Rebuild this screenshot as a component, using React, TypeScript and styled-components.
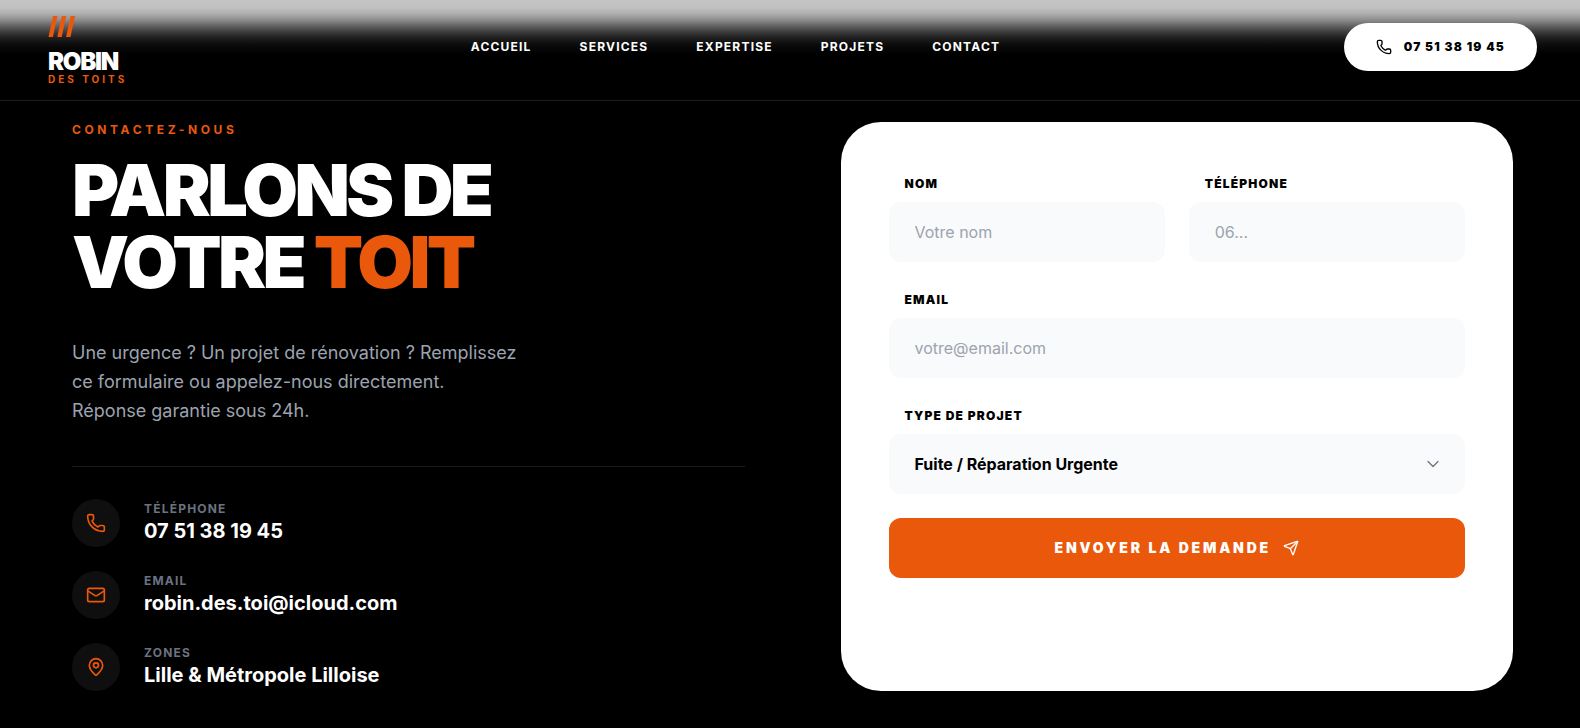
import React from "react";
import styled, { createGlobalStyle } from "styled-components";
import { ChevronDown, Mail, MapPin, Phone, Send } from "lucide-react";

const GlobalStyle = createGlobalStyle`
  *, *::before, *::after { box-sizing: border-box; }
  body {
    margin: 0;
    background: #000;
    color: #fff;
    font-family: Inter, "Liberation Sans", sans-serif;
    font-size: 16px;
    line-height: 24px;
  }
  h1, p, dl, dd, dt { margin: 0; }
  a { color: inherit; text-decoration: none; }
`;

const Header = styled.header`
  display: flex;
  align-items: center;
  justify-content: space-between;
  padding: 9px 43px 16px 48px;
  border-bottom: 1px solid #1c1c1c;
  background: linear-gradient(
    to bottom,
    #c5c5c5 0px,
    #c0c0c0 8px,
    #adadad 14px,
    #8c8c8c 20px,
    #626262 26px,
    #3c3c3c 32px,
    #1e1e1e 38px,
    #0b0b0b 45px,
    #000 54px
  );
`;

const Logo = styled.a`
  display: flex;
  flex-direction: column;
  padding-top: 7px;
`;

const LogoMark = styled.svg`
  width: 28px;
  height: 21px;
  margin-bottom: 13px;
`;

const LogoName = styled.span`
  font-size: 24px;
  line-height: 24px;
  font-weight: 900;
  letter-spacing: -0.05em;
`;

const LogoTag = styled.span`
  font-size: 10px;
  line-height: 10px;
  font-weight: 700;
  letter-spacing: 3px;
  color: #ea580c;
`;

const Nav = styled.nav`
  display: flex;
  gap: 48px;
`;

const NavLink = styled.a`
  font-size: 12px;
  line-height: 16px;
  font-weight: 700;
  letter-spacing: 0.1em;
`;

const CallLink = styled.a`
  display: flex;
  align-items: center;
  gap: 12px;
  padding: 16px 32px;
  border-radius: 24px;
  background: #fff;
  color: #000;
  font-size: 12px;
  line-height: 16px;
  font-weight: 900;
  letter-spacing: 0.1em;
`;

const Main = styled.main`
  display: grid;
  grid-template-columns: 1fr 1fr;
  gap: 96px;
  padding: 21px 67px 37px 72px;
`;

const Eyebrow = styled.p`
  margin-bottom: 16px;
  color: #ea580c;
  font-size: 12px;
  line-height: 16px;
  font-weight: 700;
  letter-spacing: 0.3em;
`;

const Title = styled.h1`
  margin-bottom: 40px;
  font-size: 72px;
  line-height: 72px;
  font-weight: 900;
  letter-spacing: -0.05em;
`;

const Accent = styled.span`
  color: #ea580c;
`;

const Intro = styled.p`
  max-width: 448px;
  margin-bottom: 41px;
  color: #9ca3af;
  font-size: 18px;
  line-height: 29px;
`;

const ContactList = styled.dl`
  display: flex;
  flex-direction: column;
  gap: 24px;
  padding-top: 32px;
  border-top: 1px solid #1a1a1a;
`;

const ContactItem = styled.div`
  display: flex;
  align-items: center;
  gap: 24px;
`;

const ContactIcon = styled.span`
  display: grid;
  place-items: center;
  width: 48px;
  height: 48px;
  border-radius: 50%;
  background: #0f0f0f;
  color: #ea580c;
`;

const ContactLabel = styled.dt`
  color: #6b7280;
  font-size: 12px;
  line-height: 16px;
  font-weight: 700;
  letter-spacing: 0.1em;
`;

const ContactValue = styled.dd`
  font-size: 20px;
  line-height: 28px;
  font-weight: 700;
`;

const Form = styled.form`
  display: flex;
  flex-direction: column;
  gap: 24px;
  padding: 48px;
  border-radius: 40px;
  background: #fff;
  color: #000;
`;

const FieldRow = styled.div`
  display: grid;
  grid-template-columns: 1fr 1fr;
  gap: 24px;
`;

const Field = styled.div`
  display: flex;
  flex-direction: column;
  gap: 8px;
  min-width: 0;
`;

const Label = styled.label`
  padding: 4px 0 0 16px;
  font-size: 12px;
  line-height: 20px;
  font-weight: 900;
  letter-spacing: 0.1em;
`;

const Input = styled.input`
  width: 100%;
  height: 60px;
  padding: 16px 24px;
  border: 2px solid transparent;
  border-radius: 12px;
  background: #f9fafb;
  color: #000;
  font: 400 16px/24px Inter, "Liberation Sans", sans-serif;
  &::placeholder { color: #9ca3af; opacity: 1; }
`;

const SelectWrap = styled.div`
  position: relative;
`;

const Select = styled.select`
  appearance: none;
  display: block;
  width: 100%;
  height: 60px;
  padding: 16px 24px;
  border: 2px solid transparent;
  border-radius: 12px;
  background: #f9fafb;
  color: #000;
  font: 700 16px/24px Inter, "Liberation Sans", sans-serif;
`;

const SelectArrow = styled(ChevronDown)`
  position: absolute;
  right: 22px;
  top: 20px;
  color: #6b7280;
  pointer-events: none;
`;

const Submit = styled.button`
  display: flex;
  align-items: center;
  justify-content: center;
  gap: 12px;
  height: 60px;
  border: 0;
  border-radius: 12px;
  background: #ea580c;
  color: #fff;
  font: 900 14px/20px Inter, "Liberation Sans", sans-serif;
  letter-spacing: 0.2em;
`;

const links = ["ACCUEIL", "SERVICES", "EXPERTISE", "PROJETS", "CONTACT"];

const contacts = [
  { icon: Phone, label: "TÉLÉPHONE", value: "07 51 38 19 45" },
  { icon: Mail, label: "EMAIL", value: "robin.des.toi@icloud.com" },
  { icon: MapPin, label: "ZONES", value: "Lille & Métropole Lilloise" },
];

export default function App() {
  return (
    <>
      <GlobalStyle />
      <Header>
        <Logo href="#">
          <LogoMark viewBox="0 0 28 21" fill="#ea580c" aria-hidden="true">
            <path d="M5 0h4.4L4.9 21H.5zM13.8 0h4.4l-4.5 21H9.3zM22.6 0H27l-4.5 21h-4.4z" />
          </LogoMark>
          <LogoName>ROBIN</LogoName>
          <LogoTag>DES TOITS</LogoTag>
        </Logo>
        <Nav>
          {links.map((l) => (
            <NavLink key={l} href={"#" + l.toLowerCase()}>{l}</NavLink>
          ))}
        </Nav>
        <CallLink href="tel:0751381945">
          <Phone size={16} strokeWidth={2} />
          07 51 38 19 45
        </CallLink>
      </Header>
      <Main>
        <section>
          <Eyebrow>CONTACTEZ-NOUS</Eyebrow>
          <Title>
            PARLONS DE<br />VOTRE <Accent>TOIT</Accent>
          </Title>
          <Intro>
            Une urgence ? Un projet de rénovation ? Remplissez ce formulaire ou
            appelez-nous directement. Réponse garantie sous 24h.
          </Intro>
          <ContactList>
            {contacts.map(({ icon: Icon, label, value }) => (
              <ContactItem key={label}>
                <ContactIcon><Icon size={20} strokeWidth={2} /></ContactIcon>
                <div>
                  <ContactLabel>{label}</ContactLabel>
                  <ContactValue>{value}</ContactValue>
                </div>
              </ContactItem>
            ))}
          </ContactList>
        </section>
        <Form onSubmit={(e) => e.preventDefault()}>
          <FieldRow>
            <Field>
              <Label htmlFor="nom">NOM</Label>
              <Input id="nom" placeholder="Votre nom" />
            </Field>
            <Field>
              <Label htmlFor="tel">TÉLÉPHONE</Label>
              <Input id="tel" type="tel" placeholder="06..." />
            </Field>
          </FieldRow>
          <Field>
            <Label htmlFor="email">EMAIL</Label>
            <Input id="email" type="email" placeholder="votre@email.com" />
          </Field>
          <Field>
            <Label htmlFor="type">TYPE DE PROJET</Label>
            <SelectWrap>
              <Select id="type">
                <option>Fuite / Réparation Urgente</option>
              </Select>
              <SelectArrow size={20} strokeWidth={1.5} />
            </SelectWrap>
          </Field>
          <Submit type="submit">
            ENVOYER LA DEMANDE
            <Send size={16} strokeWidth={2} />
          </Submit>
        </Form>
      </Main>
    </>
  );
}
